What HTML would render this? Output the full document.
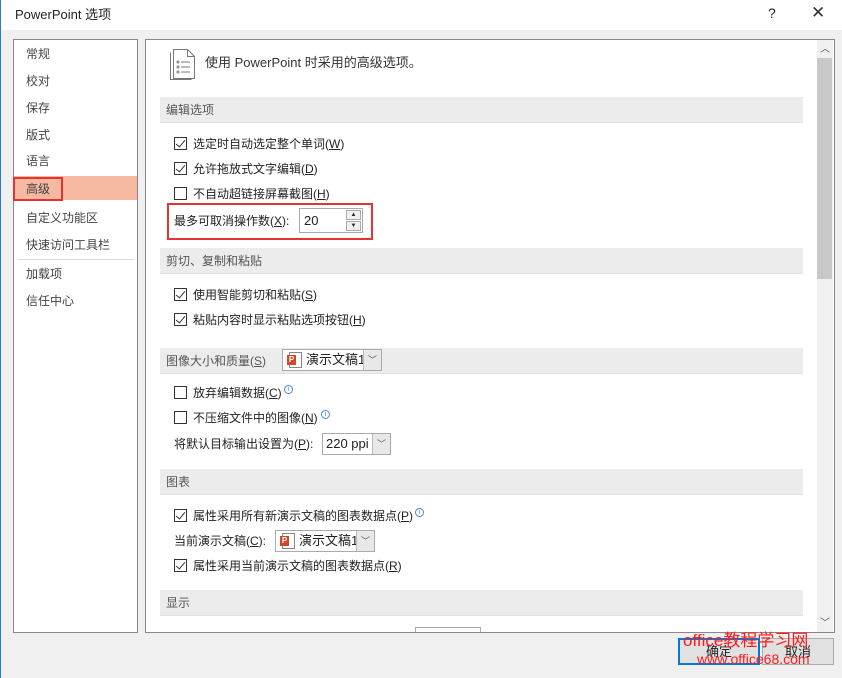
<!DOCTYPE html>
<html><head><meta charset="utf-8"><style>
*{margin:0;padding:0;box-sizing:border-box}
body{width:842px;height:678px;position:relative;background:#f0f0f0;font-family:"Liberation Sans","Noto Sans CJK SC",sans-serif;font-size:12px;color:#222;overflow:hidden}
.a{position:absolute;white-space:nowrap}
.t{line-height:16px}
.hd{position:absolute;left:160px;width:643px;height:26px;background:#ececec;border-bottom:1px solid #e2e2e2;color:#555;padding:5px 0 0 6px;line-height:16px}
.cb{position:absolute;width:13px;height:13px;border:1px solid #333;background:#fff}
.cb.on::after{content:"";position:absolute;left:3px;top:0px;width:4px;height:8px;border:solid #333;border-width:0 1.5px 1.5px 0;transform:rotate(40deg)}
.nav{position:absolute;left:26px;color:#444}
u{text-decoration:underline}
.dd{position:absolute;height:22px;border:1px solid #aaa;background:#fff}
.dd .ar{position:absolute;right:0;top:0;width:18px;height:20px;border-left:1px solid #bbb;background:#e8e8e8;color:#555;font-size:9px;text-align:center;line-height:20px}
.dd span{line-height:16px}
.pp{position:absolute;width:13px;height:16px;border:1px solid #888;background:#fff}
.pp::before{content:"P";position:absolute;left:-3px;top:2px;width:9px;height:10px;background:#d24726;color:#fff;font-size:8px;line-height:10px;text-align:center;font-weight:bold}
.info{position:absolute;width:9px;height:9px;border:1px solid #4a8ad4;border-radius:50%;color:#4a8ad4;font-size:7px;line-height:7px;text-align:center}
</style></head><body>
<div class="a" style="left:0;top:0;width:842px;height:30px;background:#fff"></div>
<div class="a" style="left:0;top:0;width:1px;height:678px;background:#2b78d4"></div>
<div class="a t" style="left:15px;top:7px;color:#222;font-size:13px">PowerPoint 选项</div>
<div class="a" style="left:768px;top:5px;font-size:14px">?</div>
<div class="a" style="left:811px;top:3px;font-size:17px;color:#333">✕</div>

<div class="a" style="left:13px;top:39px;width:125px;height:594px;background:#fff;border:1px solid #888"></div>
<div class="a" style="left:14px;top:176px;width:123px;height:24px;background:#f4b9a0"></div>
<div class="a" style="left:13px;top:177px;width:50px;height:24px;border:2px solid #e53333"></div>
<div class="nav t" style="top:46px">常规</div>
<div class="nav t" style="top:73px">校对</div>
<div class="nav t" style="top:100px">保存</div>
<div class="nav t" style="top:127px">版式</div>
<div class="nav t" style="top:153px">语言</div>
<div class="nav t" style="top:181px">高级</div>
<div class="nav t" style="top:210px">自定义功能区</div>
<div class="nav t" style="top:237px">快速访问工具栏</div>
<div class="a" style="left:18px;top:259px;width:116px;height:1px;background:#ddd"></div>
<div class="nav t" style="top:266px">加载项</div>
<div class="nav t" style="top:293px">信任中心</div>

<div class="a" style="left:145px;top:39px;width:690px;height:594px;background:#fff;border:1px solid #888"></div>
<div class="a" style="left:817px;top:40px;width:16px;height:592px;background:#f0f0f0"></div>
<div class="a" style="left:817px;top:58px;width:15px;height:221px;background:#c8c8c8"></div>
<div class="a" style="left:820px;top:40px;font-size:10px;color:#555">︿</div>
<div class="a" style="left:820px;top:614px;font-size:10px;color:#555">﹀</div>

<svg class="a" style="left:170px;top:46px" width="26" height="34" viewBox="0 0 26 34" fill="none" stroke="#777" stroke-width="1">
<path d="M3.5 3.5v29h21V10.5l-7-7z M17.5 3.5v7h7"/><path d="M0.5 6.5v27h21" />
<circle cx="8" cy="16" r="1"/><circle cx="8" cy="21" r="1"/><circle cx="8" cy="26" r="1"/>
<path d="M11 16h9M11 21h9M11 26h9"/></svg>
<div class="a t" style="left:205px;top:55px;font-size:13px;color:#333">使用 PowerPoint 时采用的高级选项。</div>

<div class="hd" style="top:97px">编辑选项</div>
<div class="cb on" style="left:174px;top:137px"></div><div class="a t" style="left:193px;top:136px">选定时自动选定整个单词(<u>W</u>)</div>
<div class="cb on" style="left:174px;top:162px"></div><div class="a t" style="left:193px;top:161px">允许拖放式文字编辑(<u>D</u>)</div>
<div class="cb" style="left:174px;top:187px"></div><div class="a t" style="left:193px;top:186px">不自动超链接屏幕截图(<u>H</u>)</div>
<div class="a t" style="left:174px;top:213px">最多可取消操作数(<u>X</u>):</div>
<div class="a" style="left:299px;top:208px;width:64px;height:25px;border:1px solid #aaa;background:#fff;padding:4px 0 0 4px;font-size:13px">20</div>
<div class="a" style="left:346px;top:210px;width:15px;height:10px;border:1px solid #aaa;background:#f0f0f0;font-size:6px;text-align:center;line-height:9px">▲</div>
<div class="a" style="left:346px;top:221px;width:15px;height:10px;border:1px solid #aaa;background:#f0f0f0;font-size:6px;text-align:center;line-height:9px">▼</div>
<div class="a" style="left:167px;top:203px;width:206px;height:37px;border:2px solid #e53333"></div>

<div class="hd" style="top:248px">剪切、复制和粘贴</div>
<div class="cb on" style="left:174px;top:288px"></div><div class="a t" style="left:193px;top:287px">使用智能剪切和粘贴(<u>S</u>)</div>
<div class="cb on" style="left:174px;top:313px"></div><div class="a t" style="left:193px;top:312px">粘贴内容时显示粘贴选项按钮(<u>H</u>)</div>

<div class="hd" style="top:348px">图像大小和质量(<u>S</u>)</div>
<div class="dd" style="left:282px;top:349px;width:100px"><div class="pp" style="left:6px;top:2px"></div><span class="a" style="left:23px;top:2px;font-size:13px">演示文稿1</span><div class="ar">﹀</div></div>
<div class="cb" style="left:174px;top:386px"></div><div class="a t" style="left:193px;top:385px">放弃编辑数据(<u>C</u>)</div><div class="info" style="left:284px;top:385px">i</div>
<div class="cb" style="left:174px;top:411px"></div><div class="a t" style="left:193px;top:410px">不压缩文件中的图像(<u>N</u>)</div><div class="info" style="left:321px;top:410px">i</div>
<div class="a t" style="left:174px;top:436px">将默认目标输出设置为(<u>P</u>):</div>
<div class="dd" style="left:322px;top:433px;width:69px"><span class="a" style="left:3px;top:2px;font-size:13px">220 ppi</span><div class="ar">﹀</div></div>

<div class="hd" style="top:469px">图表</div>
<div class="cb on" style="left:174px;top:509px"></div><div class="a t" style="left:193px;top:508px">属性采用所有新演示文稿的图表数据点(<u>P</u>)</div><div class="info" style="left:415px;top:508px">i</div>
<div class="a t" style="left:174px;top:533px">当前演示文稿(<u>C</u>):</div>
<div class="dd" style="left:275px;top:530px;width:100px"><div class="pp" style="left:6px;top:2px"></div><span class="a" style="left:23px;top:2px;font-size:13px">演示文稿1</span><div class="ar">﹀</div></div>
<div class="cb on" style="left:174px;top:559px"></div><div class="a t" style="left:193px;top:558px">属性采用当前演示文稿的图表数据点(<u>R</u>)</div>

<div class="hd" style="top:590px">显示</div>
<div class="a" style="left:415px;top:627px;width:66px;height:5px;border:1px solid #aaa;border-bottom:none"></div>

<div class="a" style="left:678px;top:638px;width:82px;height:27px;border:2px solid #0078d7;background:#e1e1e1;text-align:center;line-height:23px;font-size:13px">确定</div>
<div class="a" style="left:762px;top:638px;width:72px;height:27px;border:1px solid #adadad;background:#e1e1e1;text-align:center;line-height:25px;font-size:13px">取消</div>
<div class="a" style="left:683px;top:630px;color:#ff1a1a;font-size:17px;line-height:22px">office教程学习网</div>
<div class="a" style="left:697px;top:651px;color:#ff1a1a;font-size:14px;line-height:16px">www.office68.com</div>
</body></html>
